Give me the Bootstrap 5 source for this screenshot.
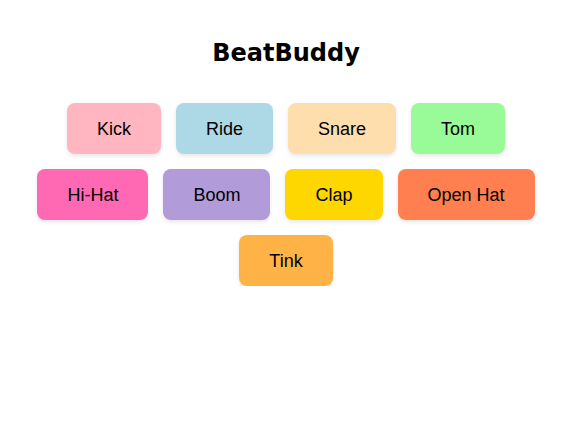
<!DOCTYPE html>
<html lang="en">
<head>
<meta charset="utf-8">
<meta name="viewport" content="width=device-width, initial-scale=1">
<title>BeatBuddy</title>
<link href="https://cdn.jsdelivr.net/npm/bootstrap@5.3.0/dist/css/bootstrap.min.css" rel="stylesheet">
<style>
  body { font-family: "Liberation Sans", Arial, sans-serif; padding: 38px 18px 0 20px; }
  .app-title { font: bold 24px/30px "DejaVu Sans", Verdana, sans-serif; color: #000; margin-bottom: 35px; }
  .pads { gap: 15px; }
  .pad { --bs-btn-padding-x: 30px; --bs-btn-font-size: 18px; --bs-btn-line-height: 21px;
    --bs-btn-border-width: 0; --bs-btn-border-radius: 8px; --bs-btn-color: #000; --bs-btn-hover-color: #000;
    --bs-btn-bg: var(--tone); --bs-btn-hover-bg: var(--tone); padding-top: 16px; padding-bottom: 14px; box-shadow: 0 2px 4px rgba(0,0,0,.1); }
  .kick { --tone: #ffb6c1; }
  .ride { --tone: #add8e6; }
  .snare { --tone: #ffdead; }
  .tom { --tone: #98fb98; }
  .hihat { --tone: #ff69b4; }
  .boom { --tone: #b19cd9; }
  .clap { --tone: #ffd700; }
  .openhat { --tone: #ff7f50; }
  .tink { --tone: #ffb347; }
</style>
</head>
<body>
<h1 class="app-title text-center">BeatBuddy</h1>
<main class="pads d-flex flex-wrap justify-content-center">
  <button type="button" class="btn pad kick">Kick</button>
  <button type="button" class="btn pad ride">Ride</button>
  <button type="button" class="btn pad snare">Snare</button>
  <button type="button" class="btn pad tom">Tom</button>
  <button type="button" class="btn pad hihat">Hi-Hat</button>
  <button type="button" class="btn pad boom">Boom</button>
  <button type="button" class="btn pad clap">Clap</button>
  <button type="button" class="btn pad openhat">Open Hat</button>
  <button type="button" class="btn pad tink">Tink</button>
</main>
<script src="https://cdn.jsdelivr.net/npm/bootstrap@5.3.0/dist/js/bootstrap.bundle.min.js"></script>
</body>
</html>
